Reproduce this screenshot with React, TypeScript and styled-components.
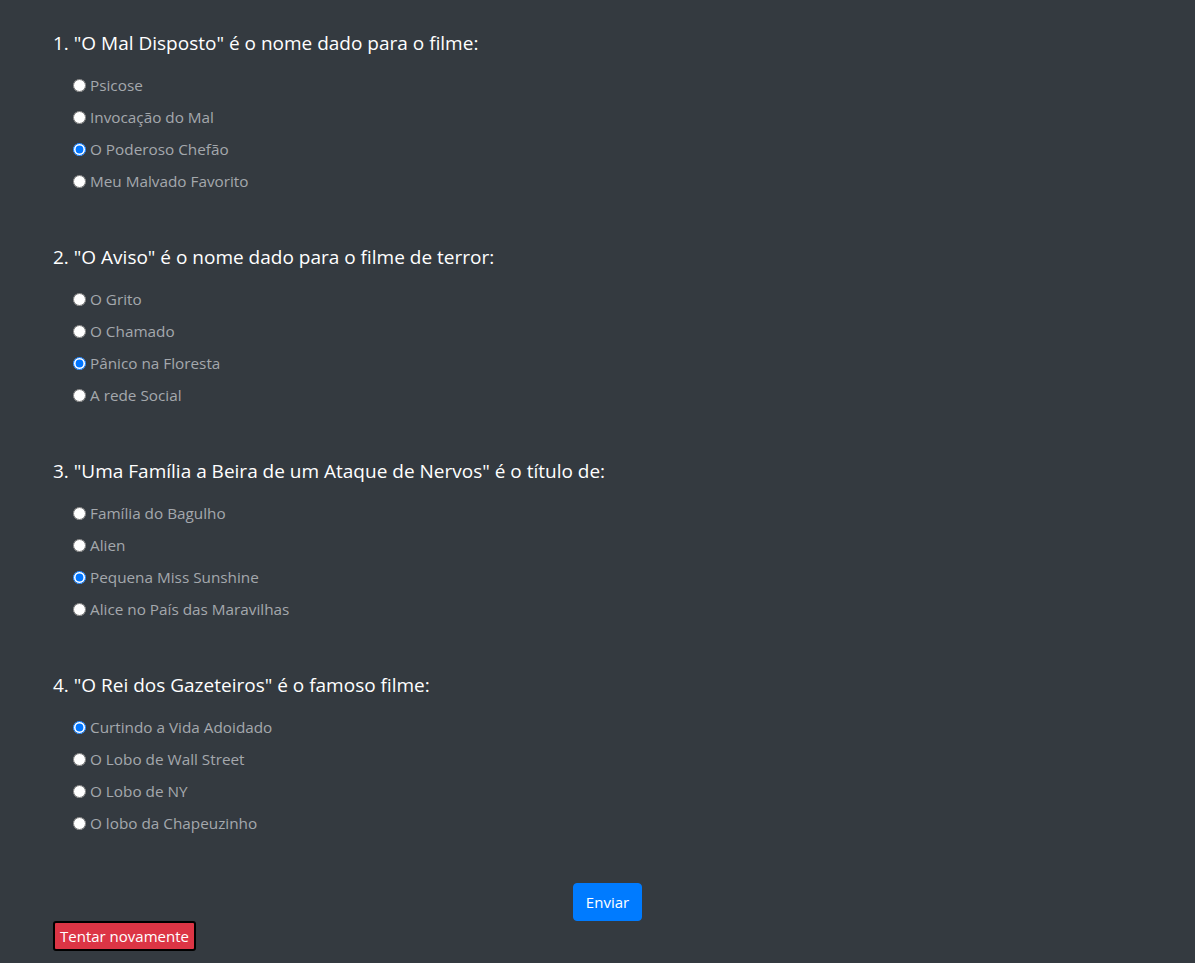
import React from "react";
import styled, { createGlobalStyle } from "styled-components";

const Global = createGlobalStyle`
  html, body { margin: 0; padding: 0; background: #343a40; }
  body { font-family: "Open Sans", "Noto Sans", sans-serif; min-height: 963px; }
`;

const Page = styled.form`
  padding: 31px 33px 12px 53px;
  display: flex;
  flex-direction: column;
`;

const Question = styled.section`
  display: flex;
  flex-direction: column;
  margin-bottom: 48px;
  &:last-of-type { margin-bottom: 44px; }
`;

const Title = styled.h5`
  margin: 0 0 14px 0;
  font-size: 19px;
  font-weight: 400;
  line-height: 24px;
  color: #ffffff;
`;

const Option = styled.label`
  display: flex;
  align-items: center;
  height: 32px;
  padding-left: 15px;
  font-size: 15.3px;
  color: #a4a8ad;
  cursor: pointer;
`;

const Radio = styled.input`
  width: 13px;
  height: 13px;
  margin: 0 4px 0 5px;
`;

const Center = styled.div`
  display: flex;
  justify-content: center;
`;

const SendButton = styled.button`
  font-family: inherit;
  height: 38px;
  padding: 0 12px;
  font-size: 15px;
  color: #fff;
  background: #007bff;
  border: 1px solid #007bff;
  border-radius: 4px;
`;

const RetryButton = styled.button`
  align-self: flex-start;
  font-family: inherit;
  height: 30px;
  padding: 0 5px;
  font-size: 15px;
  color: #fff;
  background: #dc3545;
  border: 2px solid #000;
  border-radius: 3px;
`;

const questions = [
  {
    title: '1. "O Mal Disposto" é o nome dado para o filme:',
    options: ["Psicose", "Invocação do Mal", "O Poderoso Chefão", "Meu Malvado Favorito"],
    checked: 2,
  },
  {
    title: '2. "O Aviso" é o nome dado para o filme de terror:',
    options: ["O Grito", "O Chamado", "Pânico na Floresta", "A rede Social"],
    checked: 2,
  },
  {
    title: '3. "Uma Família a Beira de um Ataque de Nervos" é o título de:',
    options: ["Família do Bagulho", "Alien", "Pequena Miss Sunshine", "Alice no País das Maravilhas"],
    checked: 2,
  },
  {
    title: '4. "O Rei dos Gazeteiros" é o famoso filme:',
    options: ["Curtindo a Vida Adoidado", "O Lobo de Wall Street", "O Lobo de NY", "O lobo da Chapeuzinho"],
    checked: 0,
  },
];

export default function App() {
  return (
    <>
      <Global />
      <Page onSubmit={(e) => e.preventDefault()}>
        {questions.map((q, qi) => (
          <Question key={qi}>
            <Title>{q.title}</Title>
            {q.options.map((o, oi) => (
              <Option key={oi}>
                <Radio type="radio" name={`q${qi}`} defaultChecked={oi === q.checked} />
                {o}
              </Option>
            ))}
          </Question>
        ))}
        <Center>
          <SendButton type="submit">Enviar</SendButton>
        </Center>
        <RetryButton type="button">Tentar novamente</RetryButton>
      </Page>
    </>
  );
}
